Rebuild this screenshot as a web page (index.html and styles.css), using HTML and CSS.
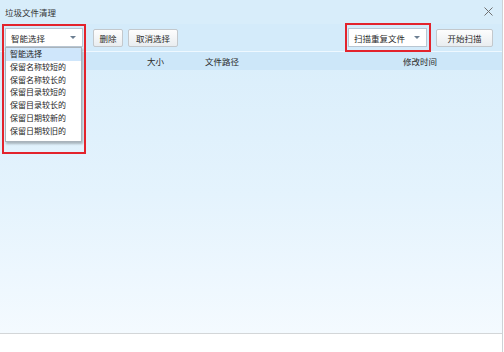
FILE: index.html
```html
<!DOCTYPE html>
<html>
<head>
<meta charset="utf-8">
<link rel="stylesheet" href="styles.css">
</head>
<body>
<div class="window">
  <div class="titlebar">
    <span class="title">垃圾文件清理</span>
    <svg class="close" width="9" height="9" viewBox="0 0 9 9"><path d="M0.5 0.5L8.5 8.5M8.5 0.5L0.5 8.5" stroke="#707070" stroke-width="1"/></svg>
  </div>
  <div class="toolbar">
    <div class="combo combo-left"><span>智能选择</span><i class="arrow"></i></div>
    <div class="btn btn-del">删除</div>
    <div class="btn btn-cancel">取消选择</div>
    <div class="spacer"></div>
    <div class="combo combo-right"><span>扫描重复文件</span><i class="arrow"></i></div>
    <div class="btn btn-start">开始扫描</div>
  </div>
  <div class="header">
    <span></span>
    <span>大小</span>
    <span>文件路径</span>
    <span>修改时间</span>
  </div>
  <div class="content"></div>
  <div class="status"></div>

  <ul class="droplist">
    <li class="sel">智能选择</li>
    <li>保留名称较短的</li>
    <li>保留名称较长的</li>
    <li>保留目录较短的</li>
    <li>保留目录较长的</li>
    <li>保留日期较新的</li>
    <li>保留日期较旧的</li>
  </ul>
  <div class="mark mark-left"></div>
  <div class="mark mark-right"></div>
</div>
</body>
</html>
```

FILE: styles.css
```css
html, body {
  margin: 0;
  padding: 0;
  background: #ffffff;
}
body {
  font-family: "Noto Sans CJK SC", "Noto Sans", sans-serif;
  font-size: 8.5px;
  color: #2a2a2a;
}
.window {
  position: relative;
  width: 503px;
  height: 352px;
  box-sizing: border-box;
  border-right: 1px solid #cdd2d6;
  display: flex;
  flex-direction: column;
  background: linear-gradient(#d6ecfa 0%, #e4f3fd 55%, #f6fbff 100%);
}
.titlebar {
  height: 24px;
  flex: none;
  display: flex;
  align-items: center;
  padding: 0 9px 0 5px;
  background: #d8edfa;
}
.title {
  flex: 1;
  color: #333333;
}
.close {
  display: block;
  margin-top: -1px;
}
.toolbar {
  height: 28px;
  flex: none;
  display: flex;
  align-items: center;
  padding: 0 9px 0 5px;
  background: #d4ebfa;
  border-bottom: 1px solid #eef8ff;
  box-sizing: border-box;
}
.combo {
  height: 19px;
  box-sizing: border-box;
  background: #ffffff;
  border: 1px solid #b9c6d2;
  display: flex;
  align-items: center;
  padding: 0 6px 0 5px;
  color: #2a2a2a;
}
.combo span { flex: 1; }
.arrow {
  width: 0;
  height: 0;
  border-left: 3px solid transparent;
  border-right: 3px solid transparent;
  border-top: 3px solid #6c7f92;
}
.combo-left { width: 78px; }
.combo-right { width: 79px; }
.btn {
  height: 18px;
  box-sizing: border-box;
  border: 1px solid #c3c8cc;
  border-radius: 2px;
  background: linear-gradient(#fdfdfd, #e9edf0);
  display: flex;
  align-items: center;
  justify-content: center;
  color: #2a2a2a;
}
.btn-del { width: 30px; margin-left: 10px; }
.btn-cancel { width: 50px; margin-left: 5px; }
.btn-start { width: 57px; margin-left: 9px; }
.spacer { flex: 1; }
.header {
  height: 18px;
  flex: none;
  display: grid;
  grid-template-columns: 147px 58px 198px 1fr;
  align-items: center;
  background: #cde7f9;
  box-sizing: border-box;
}
.content {
  flex: 1;
}
.status {
  height: 18px;
  flex: none;
  background: #ffffff;
  border-top: 1px solid #d3d6d8;
}
.droplist {
  position: absolute;
  left: 5px;
  top: 47px;
  width: 77px;
  height: 95px;
  margin: 0;
  padding: 0;
  list-style: none;
  box-sizing: border-box;
  background: #ffffff;
  border: 1px solid #a9b3bb;
  box-shadow: 1px 2px 2px rgba(0,0,0,0.25);
  font-size: 8px;
}
.droplist li {
  height: 12.8px;
  line-height: 12.8px;
  padding-left: 4px;
  color: #1e1e1e;
  white-space: nowrap;
}
.droplist li.sel {
  background: #cfe6fb;
}
.mark {
  position: absolute;
  border: 2px solid #e3232c;
  box-sizing: border-box;
}
.mark-left {
  left: 2px;
  top: 24px;
  width: 84px;
  height: 130px;
}
.mark-right {
  left: 345px;
  top: 23px;
  width: 86px;
  height: 29px;
}
```
